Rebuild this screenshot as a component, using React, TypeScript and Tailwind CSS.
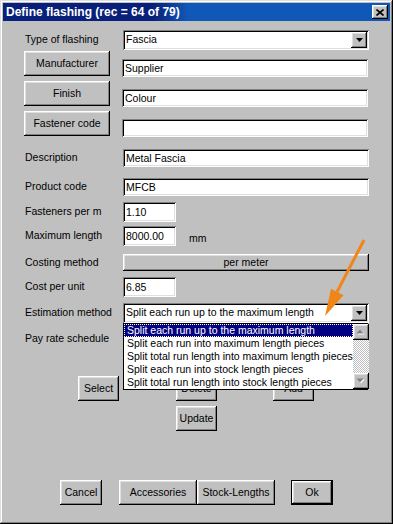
import React from 'react'

const raised =
  'bg-[#c0c0c0] shadow-[inset_-1px_-1px_#000,inset_1px_1px_#fff,inset_-2px_-2px_#808080,inset_2px_2px_#dfdfdf]'
const sunken =
  'bg-white shadow-[inset_1px_1px_#808080,inset_-1px_-1px_#fff,inset_2px_2px_#000,inset_-2px_-2px_#dfdfdf]'

const options = [
  'Split each run up to the maximum length',
  'Split each run into maximum length pieces',
  'Split total run length into maximum length pieces',
  'Split each run into stock length pieces',
  'Split total run length into stock length pieces',
]

function Btn({ children, className = '' }: { children: React.ReactNode; className?: string }) {
  return (
    <div className={`${raised} flex items-center justify-center h-[25px] ${className}`}>
      <span>{children}</span>
    </div>
  )
}

function Field({ value = '', className = '' }: { value?: string; className?: string }) {
  return (
    <div className={`${sunken} flex items-center pl-[3px] ${className}`}>
      <span className="leading-none">{value}</span>
    </div>
  )
}

function DropArrow() {
  return (
    <div className={`${raised} w-[16px] h-full flex items-center justify-center`}>
      <svg width="7" height="4" viewBox="0 0 7 4">
        <path d="M0 0H7L3.5 4Z" fill="#000" />
      </svg>
    </div>
  )
}

function Combo({ value }: { value: string }) {
  return (
    <div className={`${sunken} flex w-[246px] h-[20px] p-[2px]`}>
      <div className="flex-1 flex items-center pl-[1px]">{value}</div>
      <DropArrow />
    </div>
  )
}

function ScrollArrow({ up }: { up?: boolean }) {
  return (
    <div className={`${raised} w-[16px] h-[16px] flex items-center justify-center`}>
      <svg width="9" height="6" viewBox="0 0 9 6">
        {up ? (
          <>
            <path d="M1.5 5.5H8.5L5 1.5Z" fill="#fff" />
            <path d="M0.5 4.5H7.5L4 0.5Z" fill="#808080" />
          </>
        ) : (
          <>
            <path d="M1.5 1.5H8.5L5 5.5Z" fill="#fff" />
            <path d="M0.5 0.5H7.5L4 4.5Z" fill="#808080" />
          </>
        )}
      </svg>
    </div>
  )
}

function Row({ label, className = '', children }: { label: React.ReactNode; className?: string; children: React.ReactNode }) {
  return (
    <div className={`flex items-center ${className}`}>
      <div className="w-[98px] ml-[22px] shrink-0">{label}</div>
      {children}
    </div>
  )
}

export default function App() {
  return (
    <div className="w-[393px] h-[524px] bg-[#c0c0c0] p-[3px] relative text-black text-[10.5px] font-['Liberation_Sans',Arial,sans-serif] shadow-[inset_-1px_-1px_#000,inset_1px_1px_#dfdfdf,inset_-2px_-2px_#808080,inset_2px_2px_#fff]">
      {/* 타이틀 바 */}
      <div className="h-[18px] flex items-center justify-between pl-[3px] pr-[2px] bg-[linear-gradient(90deg,#08207a_0,#08207a_150px,#1058b8_185px,#1058b8_100%)]">
        <span className="text-white font-bold text-[12px] leading-none">Define flashing (rec = 64 of 79)</span>
        <div className={`${raised} w-[16px] h-[14px] flex items-center justify-center`}>
          <svg width="8" height="7" viewBox="0 0 8 7">
            <path d="M0.5 0.5L7.5 6.5M7.5 0.5L0.5 6.5" stroke="#000" strokeWidth="1.6" />
          </svg>
        </div>
      </div>

      {/* 폼 */}
      <div className="flex flex-col">
        <Row label="Type of flashing" className="mt-[9px] h-[20px]">
          <Combo value="Fascia" />
        </Row>

        {[
          ['Manufacturer', 'Supplier', 'mt-[1px]'],
          ['Finish', 'Colour', 'mt-[4px]'],
          ['Fastener code', '', 'mt-[4px]'],
        ].map(([btn, val, mt]) => (
          <div key={btn} className={`flex h-[26px] ${mt}`}>
            <div className="w-[98px] ml-[21px] shrink-0">
              <Btn className="w-[86px]">{btn}</Btn>
            </div>
            <Field value={val} className="w-[246px] h-[18px] self-end" />
          </div>
        ))}

        <Row label="Description" className="mt-[12px] h-[18px]">
          <Field value="Metal Fascia" className="w-[246px] h-[18px]" />
        </Row>
        <Row label="Product code" className="mt-[11px] h-[18px]">
          <Field value="MFCB" className="w-[246px] h-[18px]" />
        </Row>
        <Row label="Fasteners per m" className="mt-[6px] h-[20px]">
          <Field value="1.10" className="w-[53px] h-[20px]" />
        </Row>
        <Row label="Maximum length" className="mt-[4px] h-[20px]">
          <Field value="8000.00" className="w-[53px] h-[20px]" />
          <span className="ml-[13px] mt-[5px]">mm</span>
        </Row>
        <Row label="Costing method" className="mt-[8px] h-[17px]">
          <div className={`${raised} w-[246px] h-[17px] flex items-center justify-center`}>per meter</div>
        </Row>
        <Row label="Cost per unit" className="mt-[6px] h-[20px]">
          <Field value="6.85" className="w-[53px] h-[20px]" />
        </Row>
        <Row label="Estimation method" className="mt-[6px] h-[20px] relative z-10">
          <div className="relative">
            <Combo value="Split each run up to the maximum length" />
            {/* 펼쳐진 목록 */}
            <div className="absolute left-0 top-[20px] w-[245px] h-[67px] border border-black bg-white flex">
              <div className="flex-1 flex flex-col">
                {options.map((o, i) => (
                  <div
                    key={o}
                    className={`h-[13px] flex items-center pl-[3px] whitespace-nowrap ${
                      i === 0 ? 'bg-[#000080] text-white outline outline-1 outline-dotted outline-white -outline-offset-1' : ''
                    }`}
                  >
                    {o}
                  </div>
                ))}
              </div>
              <div className="w-[16px] flex flex-col">
                <ScrollArrow up />
                <div className="flex-1 bg-[repeating-conic-gradient(#c0c0c0_0%_25%,#ffffff_0%_50%)] bg-[length:2px_2px]" />
                <ScrollArrow />
              </div>
            </div>
          </div>
        </Row>
        <Row label="Pay rate schedule" className="mt-[8px] h-[16px]">
          <span />
        </Row>

        <div className="flex mt-[29px]">
          <Btn className="w-[41px] ml-[75px]">Select</Btn>
          <Btn className="w-[41px] ml-[57px]">Delete</Btn>
          <Btn className="w-[41px] ml-[56px]">Add</Btn>
        </div>
        <div className="flex mt-[5px]">
          <Btn className="w-[41px] ml-[173px]">Update</Btn>
        </div>

        <div className="flex mt-[49px]">
          <Btn className="w-[42px] ml-[57px]">Cancel</Btn>
          <Btn className="w-[78px] ml-[17px]">Accessories</Btn>
          <Btn className="w-[78px]">Stock-Lengths</Btn>
          <div className="ml-[16px] w-[42px] h-[25px] border border-black">
            <Btn className="w-full h-full">Ok</Btn>
          </div>
        </div>
      </div>

      {/* 주석 화살표 */}
      <svg className="absolute left-0 top-0 pointer-events-none z-20" width="393" height="524">
        <line x1="364" y1="240" x2="337" y2="292" stroke="#f0861a" strokeWidth="3" />
        <path d="M331 288.8L343.5 295.2L325 316Z" fill="#f0861a" />
      </svg>
    </div>
  )
}
